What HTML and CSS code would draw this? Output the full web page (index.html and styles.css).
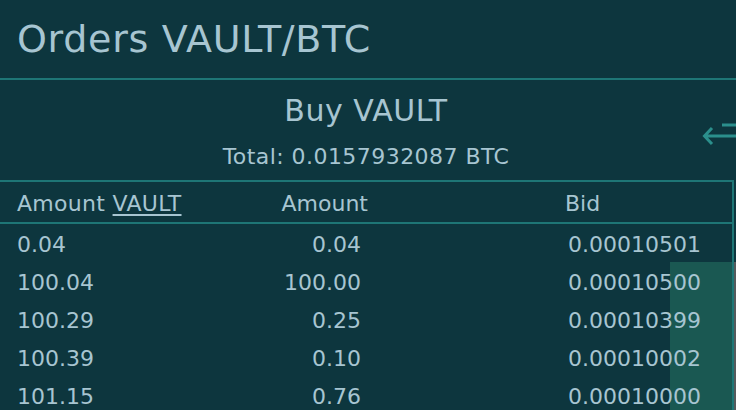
FILE: index.html
```html
<!DOCTYPE html>
<html>
<head>
<meta charset="utf-8">
<link rel="stylesheet" href="styles.css">
</head>
<body>
<div class="page">
  <h1 class="title">Orders VAULT/BTC</h1>
  <section class="side">
    <div class="side-title">Buy VAULT</div>
    <div class="side-total">Total: 0.0157932087 BTC</div>
    <svg class="swap" width="34" height="26" viewBox="0 0 34 26">
      <path d="M20 4 H34" stroke="#2b8f8c" stroke-width="3" fill="none"/>
      <path d="M34 15 H3 M10 7 L2.5 15 L10 23" stroke="#2b8f8c" stroke-width="3" fill="none"/>
    </svg>
  </section>
  <div class="book">
    <div class="row head">
      <div class="c1">Amount <span class="u">VAULT</span></div>
      <div class="c2 h2">Amount</div>
      <div class="c3 h3">Bid</div>
    </div>
    <div class="rows">
      <div class="row">
        <div class="c1">0.04</div><div class="c2">0.04</div><div class="c3">0.00010501</div>
      </div>
      <div class="row">
        <span class="depth" style="width:62px"></span>
        <div class="c1">100.04</div><div class="c2">100.00</div><div class="c3">0.00010500</div>
      </div>
      <div class="row">
        <span class="depth" style="width:62px"></span>
        <div class="c1">100.29</div><div class="c2">0.25</div><div class="c3">0.00010399</div>
      </div>
      <div class="row">
        <span class="depth" style="width:62px"></span>
        <div class="c1">100.39</div><div class="c2">0.10</div><div class="c3">0.00010002</div>
      </div>
      <div class="row">
        <span class="depth" style="width:62px"></span>
        <div class="c1">101.15</div><div class="c2">0.76</div><div class="c3">0.00010000</div>
      </div>
      <span class="scroll"></span>
    </div>
  </div>
</div>
</body>
</html>
```

FILE: styles.css
```css
html, body {
  margin: 0;
  padding: 0;
  background: #0d363e;
  overflow: hidden;
}
body {
  width: 736px;
  height: 410px;
  font-family: "DejaVu Sans", Verdana, sans-serif;
  color: #a7c5d1;
}
.page {
  width: 736px;
  height: 410px;
  overflow: hidden;
}
.title {
  margin: 0;
  height: 78px;
  line-height: 78px;
  padding-left: 17px;
  font-size: 38px;
  letter-spacing: 0.7px;
  font-weight: normal;
  border-bottom: 2px solid #1e7676;
}
.side {
  position: relative;
  height: 100px;
  padding-top: 13px;
  padding-right: 4px;
  box-sizing: border-box;
  display: flex;
  flex-direction: column;
  align-items: center;
}
.side-title {
  font-size: 30px;
  line-height: 36px;
  letter-spacing: 0.5px;
}
.side-total {
  font-size: 22px;
  line-height: 30px;
  margin-top: 13px;
  letter-spacing: 0.45px;
}
.swap {
  position: absolute;
  right: 0;
  top: 41px;
}
.book {
  width: 734px;
  border-top: 2px solid #1e7676;
  border-right: 2px solid #1e7676;
  box-sizing: border-box;
}
.row {
  position: relative;
  display: grid;
  grid-template-columns: 261px 100px 1fr;
  height: 38px;
  font-size: 22px;
  line-height: 36px;
  padding-top: 3px;
  box-sizing: border-box;
}
.row.head {
  height: 42px;
  padding-top: 4px;
  border-bottom: 2px solid #1e7676;
}
.c1 {
  padding-left: 17px;
  white-space: nowrap;
  position: relative;
}
.c2 {
  text-align: right;
  white-space: nowrap;
  position: relative;
}
.c3 {
  padding-left: 207px;
  white-space: nowrap;
  position: relative;
}
.head .c1 {
  letter-spacing: 0.3px;
}
.h2 {
  margin-right: -7px;
}
.h3 {
  padding-left: 204px;
}
.u {
  text-decoration: underline;
  text-underline-offset: 3px;
}
.rows {
  position: relative;
}
.depth {
  position: absolute;
  right: 0;
  top: 0;
  bottom: 0;
  background: #1a5852;
}
.scroll {
  position: absolute;
  right: -4px;
  top: 38px;
  bottom: -40px;
  width: 2px;
  background: #555a5c;
}
```
